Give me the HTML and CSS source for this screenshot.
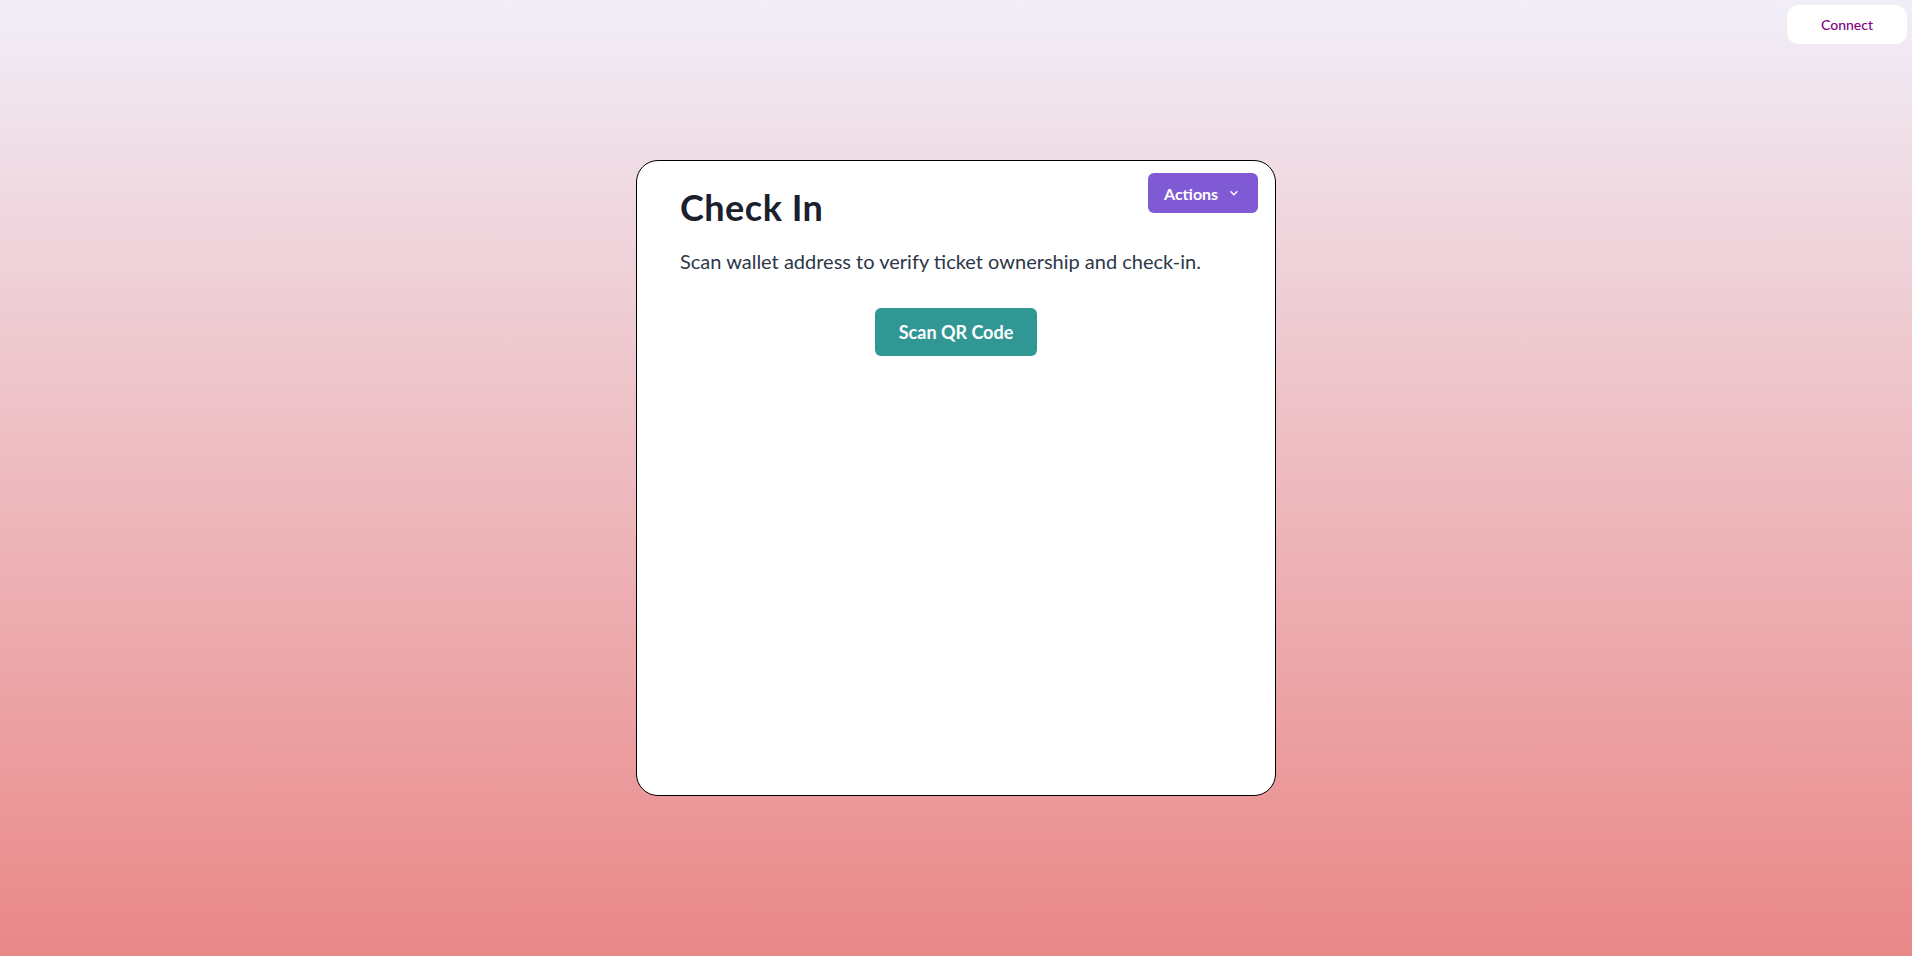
FILE: index.html
```html
<!DOCTYPE html>
<html lang="en">
<head>
<meta charset="utf-8">
<title>Check In</title>
<link rel="stylesheet" href="styles.css">
</head>
<body>
<header class="topbar">
  <button class="connect-btn" type="button">Connect</button>
</header>
<main class="page">
  <section class="card">
    <button class="actions-btn" type="button">
      <span>Actions</span>
      <svg class="chevron" viewBox="0 0 24 24" aria-hidden="true"><path d="M16.59 8.59L12 13.17 7.41 8.59 6 10l6 6 6-6z" fill="currentColor"/></svg>
    </button>
    <h1 class="title">Check In</h1>
    <p class="desc">Scan wallet address to verify ticket ownership and check-in.</p>
    <div class="scan-row">
      <button class="scan-btn" type="button">Scan QR Code</button>
    </div>
  </section>
</main>
</body>
</html>
```
FILE: styles.css
```css
* { box-sizing: border-box; }
html, body { margin: 0; padding: 0; }
body {
  font-family: "Lato", "Open Sans", sans-serif;
  color: #1a202c;
  min-height: 100vh;
  background: linear-gradient(to bottom, #f1eef8 0%, #ea8787 100%);
}
.topbar {
  position: fixed;
  top: 0;
  left: 0;
  right: 0;
  display: flex;
  justify-content: flex-end;
  padding: 5px 5px 0 0;
}
.connect-btn {
  font-family: inherit;
  width: 120px;
  height: 39px;
  border: none;
  border-radius: 12px;
  background: #ffffff;
  color: #800080;
  font-size: 14px;
  font-weight: 500;
  cursor: pointer;
}
.page {
  min-height: 100vh;
  display: flex;
  align-items: center;
  justify-content: center;
}
.card {
  position: relative;
  width: 640px;
  height: 636px;
  background: #ffffff;
  border: 1px solid #000000;
  border-radius: 22px;
  padding: 25px 40px 40px 43px;
}
.actions-btn {
  position: absolute;
  top: 12px;
  right: 17px;
  height: 40px;
  width: 110px;
  padding: 0 16px;
  border: none;
  border-radius: 6px;
  background: #805ad5;
  color: #ffffff;
  font-family: inherit;
  font-size: 16px;
  font-weight: 700;
  display: flex;
  align-items: center;
  justify-content: center;
  gap: 8px;
  cursor: pointer;
}
.chevron { width: 16px; height: 16px; }
.title {
  margin: 0;
  font-size: 36px;
  line-height: 1.2;
  font-weight: 700;
  letter-spacing: 0.5px;
  color: #1a202c;
}
.desc {
  margin: 17px 0 0;
  font-size: 20px;
  line-height: 30px;
  color: #2d3748;
}
.scan-row {
  display: flex;
  justify-content: center;
  margin-top: 32px;
  padding-right: 3px;
}
.scan-btn {
  height: 48px;
  padding: 0 24px;
  border: none;
  border-radius: 6px;
  background: #319795;
  color: #ffffff;
  font-family: inherit;
  font-size: 18px;
  font-weight: 700;
  cursor: pointer;
}
```
